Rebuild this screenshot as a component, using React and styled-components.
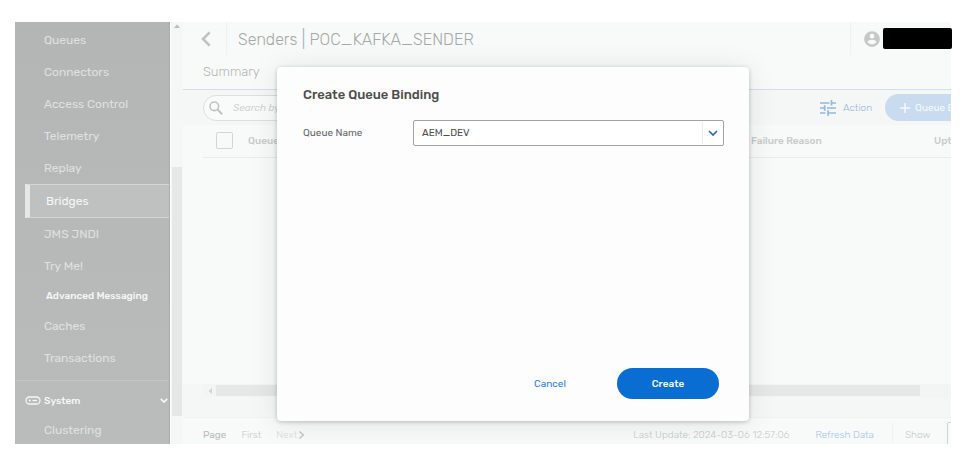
import React, { useState } from "react";
import styled, { createGlobalStyle, css } from "styled-components";

const GlobalStyle = createGlobalStyle`
  * {
    box-sizing: border-box;
  }
  body {
    margin: 0;
    background: #ffffff;
    font-family: Rubik, Roboto, "Liberation Sans", sans-serif;
    font-size: 10px;
    color: #c5c8c7;
  }
  button,
  input,
  select {
    font-family: inherit;
  }
  a {
    color: inherit;
    text-decoration: none;
  }
`;

const Frame = styled.div`
  position: relative;
  display: flex;
  height: calc(100vh - 35px);
  margin: 22px 21px 13px 15px;
  background: #f8faf9;
`;

const Sidebar = styled.nav`
  flex: 0 0 155px;
  padding-top: 2px;
  overflow: hidden;
  background: linear-gradient(#b4b6b5, #babcbb);
  border-right: 1px solid #a9abaa;
`;

const NavLink = styled.a`
  display: flex;
  align-items: center;
  height: 32px;
  padding-left: 29px;
  font-size: 12px;
  color: #dfe1e0;
  ${({ $active }) =>
    $active &&
    css`
      height: 34px;
      margin-left: 10px;
      padding-left: 16px;
      color: #f6f7f7;
      background: #bfc1c0;
      border: 1px solid #d3d5d4;
      border-left: 5px solid #e6e8e7;
      border-right: 0;
    `}
`;

const NavHeading = styled.h2`
  display: flex;
  align-items: center;
  height: 28px;
  margin: 0;
  padding-left: 31px;
  font-size: 10px;
  font-weight: 500;
  color: #f6f7f7;
`;

const NavGroup = styled.button`
  display: flex;
  align-items: center;
  width: 100%;
  height: 34px;
  margin-top: 6px;
  padding: 6px 1px 0 10px;
  border: 0;
  border-top: 1px solid #c3c5c4;
  background: none;
  font-size: 10px;
  font-weight: 500;
  color: #f6f7f7;
  span {
    flex: 1;
    padding-left: 3px;
    text-align: left;
  }
`;

const NavScroll = styled.div`
  display: flex;
  flex-direction: column;
  align-items: center;
  flex: 0 0 13px;
  padding: 2px 1px 28px;
  background: #f5f6f6;
  border-left: 1px solid #ffffff;
`;

const NavThumb = styled.div`
  width: 100%;
  height: 249px;
  margin-top: auto;
  background: #e6e8e7;
`;

const Main = styled.main`
  flex: 1;
  min-width: 0;
  display: flex;
  flex-direction: column;
`;

const Header = styled.header`
  display: flex;
  flex: 0 0 33px;
  align-items: center;
`;

const BackButton = styled.button`
  display: flex;
  align-items: center;
  width: 44px;
  height: 33px;
  padding: 0 0 0 18px;
  border: 0;
  border-right: 1px solid #f0f2f1;
  background: none;
  color: #bfc2c1;
`;

const Title = styled.h1`
  flex: 1;
  margin: 0;
  padding-left: 11px;
  font-size: 16px;
  font-weight: 300;
  white-space: nowrap;
  color: #a5a8a7;
  span {
    font-size: 18px;
    color: #a5b4bf;
  }
`;

const User = styled.div`
  display: flex;
  align-items: center;
  gap: 2px;
  height: 33px;
  padding-left: 12px;
  border-left: 1px solid #f0f2f1;
  color: #c5c8c7;
`;

const UserName = styled.div`
  width: 69px;
  height: 21px;
  margin-right: -1px;
  border-radius: 2px;
  background: #000000;
`;

const Tabs = styled.div`
  display: flex;
  flex: 0 0 35px;
  align-items: center;
  padding: 0 0 1px 20px;
  border-bottom: 1px solid #d0dfee;
  font-size: 13px;
  font-weight: 300;
  color: #b4b7b6;
`;

const Toolbar = styled.div`
  display: flex;
  flex: 0 0 35px;
  align-items: center;
  justify-content: space-between;
  padding-left: 20px;
  overflow: hidden;
  background: #f5f6f6;
`;

const Search = styled.label`
  display: flex;
  align-items: center;
  gap: 10px;
  width: 240px;
  height: 26px;
  padding-left: 5px;
  border: 1px solid #dddfde;
  border-radius: 13px;
  background: #f9fbfa;
  color: #c0c3c2;
  input {
    flex: 1;
    min-width: 0;
    padding: 0;
    border: 0;
    background: none;
    font-size: 10px;
    font-style: italic;
  }
  input::placeholder {
    color: #cfd2d1;
  }
`;

const Tools = styled.div`
  display: flex;
  align-items: center;
  gap: 13px;
  width: 131px;
`;

const ActionButton = styled.button`
  display: flex;
  flex: none;
  align-items: center;
  gap: 7px;
  padding: 0;
  border: 0;
  background: none;
  font-size: 10px;
  font-weight: 300;
  color: #93b8e2;
`;

const AddButton = styled.button`
  display: flex;
  flex: none;
  align-items: center;
  gap: 5px;
  height: 27px;
  padding: 0 20px 0 15px;
  border: 0;
  border-radius: 14px;
  background: #c8dbef;
  font-size: 10px;
  font-weight: 400;
  color: #f6f9fb;
`;

const TablePanel = styled.div`
  flex: 1;
  min-height: 0;
  margin-left: 20px;
  overflow: hidden;
`;

const Table = styled.table`
  width: 840px;
  table-layout: fixed;
  border-collapse: collapse;
  th {
    height: 32px;
    padding: 0;
    border-bottom: 1px solid #e9ebea;
    font-size: 10px;
    font-weight: 500;
    text-align: left;
    color: #c8cbca;
  }
`;

const CheckBox = styled.input`
  display: block;
  appearance: none;
  width: 17px;
  height: 17px;
  margin: 0 0 0 13px;
  border: 1px solid #d3d6d5;
  border-radius: 2px;
`;

const TableScroll = styled.div`
  display: flex;
  align-items: center;
  flex: 0 0 13px;
  margin: 0 0 20px 20px;
  padding: 0 31px 0 5px;
  background: #f3f4f4;
  color: #d2d5d4;
`;

const TableThumb = styled.div`
  flex: 1;
  height: 11px;
  margin-left: 4px;
  background: #e6e8e7;
`;

const Lower = styled.div`
  display: flex;
  flex-direction: column;
  background: #f5f6f6;
`;

const Footer = styled.footer`
  display: flex;
  flex: 0 0 27px;
  align-items: center;
  padding: 8px 0 0 20px;
  overflow: hidden;
  border-top: 1px solid #f0f2f1;
  background: #f8faf9;
  font-size: 10px;
  font-weight: 300;
  white-space: nowrap;
  color: #c5c8c7;
`;

const Pager = styled.div`
  display: flex;
  gap: 15px;
  margin-right: auto;
  strong {
    font-weight: 400;
    color: #b8bbba;
  }
`;

const PageButton = styled.button`
  display: flex;
  align-items: center;
  gap: 1px;
  padding: 0;
  border: 0;
  background: none;
  font-size: 10px;
  font-weight: 300;
  color: ${({ $muted }) => ($muted ? "#d9dbda" : "#c5c8c7")};
  svg {
    color: #c5c8c7;
  }
`;

const Refresh = styled.button`
  padding: 0;
  margin: 0 18px 0 26px;
  border: 0;
  background: none;
  font-size: 10px;
  font-weight: 300;
  color: #9fc3e9;
`;

const Show = styled.label`
  display: flex;
  flex: none;
  align-items: center;
  gap: 17px;
  width: 59px;
  height: 24px;
  padding-left: 12px;
  border-left: 1px solid #f0f2f1;
  select {
    flex: none;
    width: 50px;
    height: 26px;
    border: 1px solid #d0d3d2;
    border-radius: 2px;
    background: #f9fbfa;
    appearance: none;
  }
`;

const Overlay = styled.div`
  position: absolute;
  inset: 0;
  display: flex;
  align-items: center;
  justify-content: center;
  padding: 22px 0 0 60px;
`;

const Dialog = styled.form`
  display: flex;
  flex-direction: column;
  width: 472px;
  height: 354px;
  padding: 20px 25px 22px 26px;
  border-radius: 4px;
  background: #fdfdfd;
  box-shadow: 0 1px 4px rgba(0, 0, 0, 0.22), 0 2px 30px rgba(0, 0, 0, 0.09);
`;

const DialogTitle = styled.h2`
  margin: 0 0 17px;
  font-size: 13px;
  font-weight: 500;
  line-height: 16px;
  color: #4c4d4e;
`;

const Field = styled.div`
  display: flex;
  align-items: center;
  label {
    width: 110px;
    font-size: 10px;
    color: #656667;
  }
`;

const SelectBox = styled.div`
  position: relative;
  flex: 1;
  select {
    display: block;
    width: 100%;
    height: 26px;
    padding: 0 30px 0 8px;
    border: 1px solid #a0a2a3;
    border-radius: 2px;
    background: #ffffff;
    font-size: 10px;
    color: #4c4d4e;
    appearance: none;
  }
`;

const SelectArrow = styled.span`
  position: absolute;
  top: 2px;
  right: 1px;
  bottom: 2px;
  display: flex;
  align-items: center;
  justify-content: center;
  width: 21px;
  border-left: 1px solid #ececec;
  color: #2469bd;
  pointer-events: none;
`;

const DialogActions = styled.div`
  display: flex;
  align-items: center;
  justify-content: flex-end;
  gap: 16px;
  margin-top: auto;
  padding-right: 5px;
`;

const DialogButton = styled.button`
  width: 102px;
  height: 31px;
  border: 0;
  border-radius: 16px;
  font-size: 10px;
  font-weight: ${({ $primary }) => ($primary ? 500 : 400)};
  background: ${({ $primary }) => ($primary ? "#096dd1" : "transparent")};
  color: ${({ $primary }) => ($primary ? "#f2f7fc" : "#2c80d6")};
`;

const Chevron = ({ width, height, stroke = 2 }) => (
  <svg width={width} height={height} viewBox="0 0 10 6" fill="none">
    <path d="M1 1l4 4 4-4" stroke="currentColor" strokeWidth={stroke} />
  </svg>
);

const BackIcon = () => (
  <svg width="10" height="16" viewBox="0 0 10 16" fill="none">
    <path d="M8.7 1.3L2 8l6.7 6.7" stroke="currentColor" strokeWidth="2.6" />
  </svg>
);

const NextIcon = () => (
  <svg width="7" height="10" viewBox="0 0 7 10" fill="none">
    <path d="M1.5 1.5L5.2 5 1.5 8.5" stroke="currentColor" strokeWidth="1.6" />
  </svg>
);

const SystemIcon = () => (
  <svg width="16" height="9" viewBox="0 0 16 9" fill="none">
    <rect x="1" y="1" width="14" height="7" rx="3.5" stroke="currentColor" strokeWidth="1.3" />
    <circle cx="4.8" cy="4.5" r="1.1" fill="currentColor" />
    <path d="M7.5 4.5h4.5" stroke="currentColor" strokeWidth="1.3" />
  </svg>
);

const UserIcon = () => (
  <svg width="18" height="18" viewBox="0 0 24 24" fill="currentColor">
    <path d="M12 1.500a10.500 10.500 0 1 0 0 21 10.500 10.500 0 0 0 0-21zm0 3.500a3.200 3.200 0 1 1 0 6.400 3.200 3.200 0 0 1 0-6.400zm0 14.200a7.200 7.200 0 0 1-6-3.200c0-2 4-3.100 6-3.100s6 1.100 6 3.100a7.200 7.200 0 0 1-6 3.200z" />
  </svg>
);

const SearchIcon = () => (
  <svg width="14" height="14" viewBox="0 0 14 14" fill="none" stroke="currentColor">
    <circle cx="5.3" cy="5.3" r="4.3" strokeWidth="1.6" />
    <path d="M8.5 8.5l4.7 4.7" strokeWidth="2" />
  </svg>
);

const TuneIcon = () => (
  <svg width="16" height="16" viewBox="0 0 16 16" fill="none">
    <path
      d="M0 3h9.5M11.500 3H16M11.500 0v5.500M0 8h4.500M7 8h9M4.700 5.300v5.400M0 13h5.500M8 13h8M8 10.300V16"
      stroke="currentColor"
      strokeWidth="1.7"
    />
  </svg>
);

const PlusIcon = () => (
  <svg width="10" height="10" viewBox="0 0 10 10">
    <path d="M5 0v10M0 5h10" stroke="currentColor" strokeWidth="1.5" />
  </svg>
);

const UpArrow = () => (
  <svg width="6" height="4" viewBox="0 0 6 4">
    <path d="M0 4l3-3.500L6 4z" fill="#b8bbba" />
  </svg>
);

const LeftArrow = () => (
  <svg width="4" height="6" viewBox="0 0 4 6">
    <path d="M4 0L.5 3 4 6z" fill="currentColor" />
  </svg>
);

const links = [
  "Queues",
  "Connectors",
  "Access Control",
  "Telemetry",
  "Replay",
  "Bridges",
  "JMS JNDI",
  "Try Me!",
];

export default function App() {
  const [queue, setQueue] = useState("AEM_DEV");

  return (
    <>
      <GlobalStyle />
      <Frame>
        <Sidebar>
          {links.map((name) => (
            <NavLink key={name} href="#" $active={name === "Bridges"}>
              {name}
            </NavLink>
          ))}
          <NavHeading>Advanced Messaging</NavHeading>
          <NavLink href="#">Caches</NavLink>
          <NavLink href="#">Transactions</NavLink>
          <NavGroup type="button">
            <SystemIcon />
            <span>System</span>
            <Chevron width="8" height="5" />
          </NavGroup>
          <NavLink href="#">Clustering</NavLink>
        </Sidebar>
        <NavScroll>
          <UpArrow />
          <NavThumb />
        </NavScroll>

        <Main>
          <Header>
            <BackButton type="button" aria-label="Back">
              <BackIcon />
            </BackButton>
            <Title>
              Senders <span>|</span> POC_KAFKA_SENDER
            </Title>
            <User>
              <UserIcon />
              <UserName />
            </User>
          </Header>
          <Tabs>
            <a href="#">Summary</a>
          </Tabs>
          <Toolbar>
            <Search>
              <SearchIcon />
              <input type="text" placeholder="Search by name" aria-label="Search" />
            </Search>
            <Tools>
              <ActionButton type="button">
                <TuneIcon />
                Action
              </ActionButton>
              <AddButton type="button">
                <PlusIcon />
                Queue Binding
              </AddButton>
            </Tools>
          </Toolbar>
          <TablePanel>
            <Table>
              <colgroup>
                <col width="45" />
                <col width="503" />
                <col width="183" />
                <col />
              </colgroup>
              <thead>
                <tr>
                  <th>
                    <CheckBox type="checkbox" aria-label="Select all" />
                  </th>
                  <th>Queue Name</th>
                  <th>Failure Reason</th>
                  <th>Uptime</th>
                </tr>
              </thead>
            </Table>
          </TablePanel>
          <Lower>
            <TableScroll>
              <LeftArrow />
              <TableThumb />
            </TableScroll>
            <Footer>
              <Pager>
                <strong>Page</strong>
                <PageButton type="button">First</PageButton>
                <PageButton type="button" $muted>
                  Next <NextIcon />
                </PageButton>
              </Pager>
              <span>Last Update: 2024-03-06 12:57:06</span>
              <Refresh type="button">Refresh Data</Refresh>
              <Show>
                Show
                <select />
              </Show>
            </Footer>
          </Lower>
        </Main>

        <Overlay>
          <Dialog role="dialog" aria-labelledby="dialog-title" onSubmit={(e) => e.preventDefault()}>
            <DialogTitle id="dialog-title">Create Queue Binding</DialogTitle>
            <Field>
              <label htmlFor="queue-name">Queue Name</label>
              <SelectBox>
                <select id="queue-name" value={queue} onChange={(e) => setQueue(e.target.value)}>
                  <option value="AEM_DEV">AEM_DEV</option>
                </select>
                <SelectArrow>
                  <Chevron width="10" height="6" stroke={1.7} />
                </SelectArrow>
              </SelectBox>
            </Field>
            <DialogActions>
              <DialogButton type="button">Cancel</DialogButton>
              <DialogButton type="submit" $primary>
                Create
              </DialogButton>
            </DialogActions>
          </Dialog>
        </Overlay>
      </Frame>
    </>
  );
}
